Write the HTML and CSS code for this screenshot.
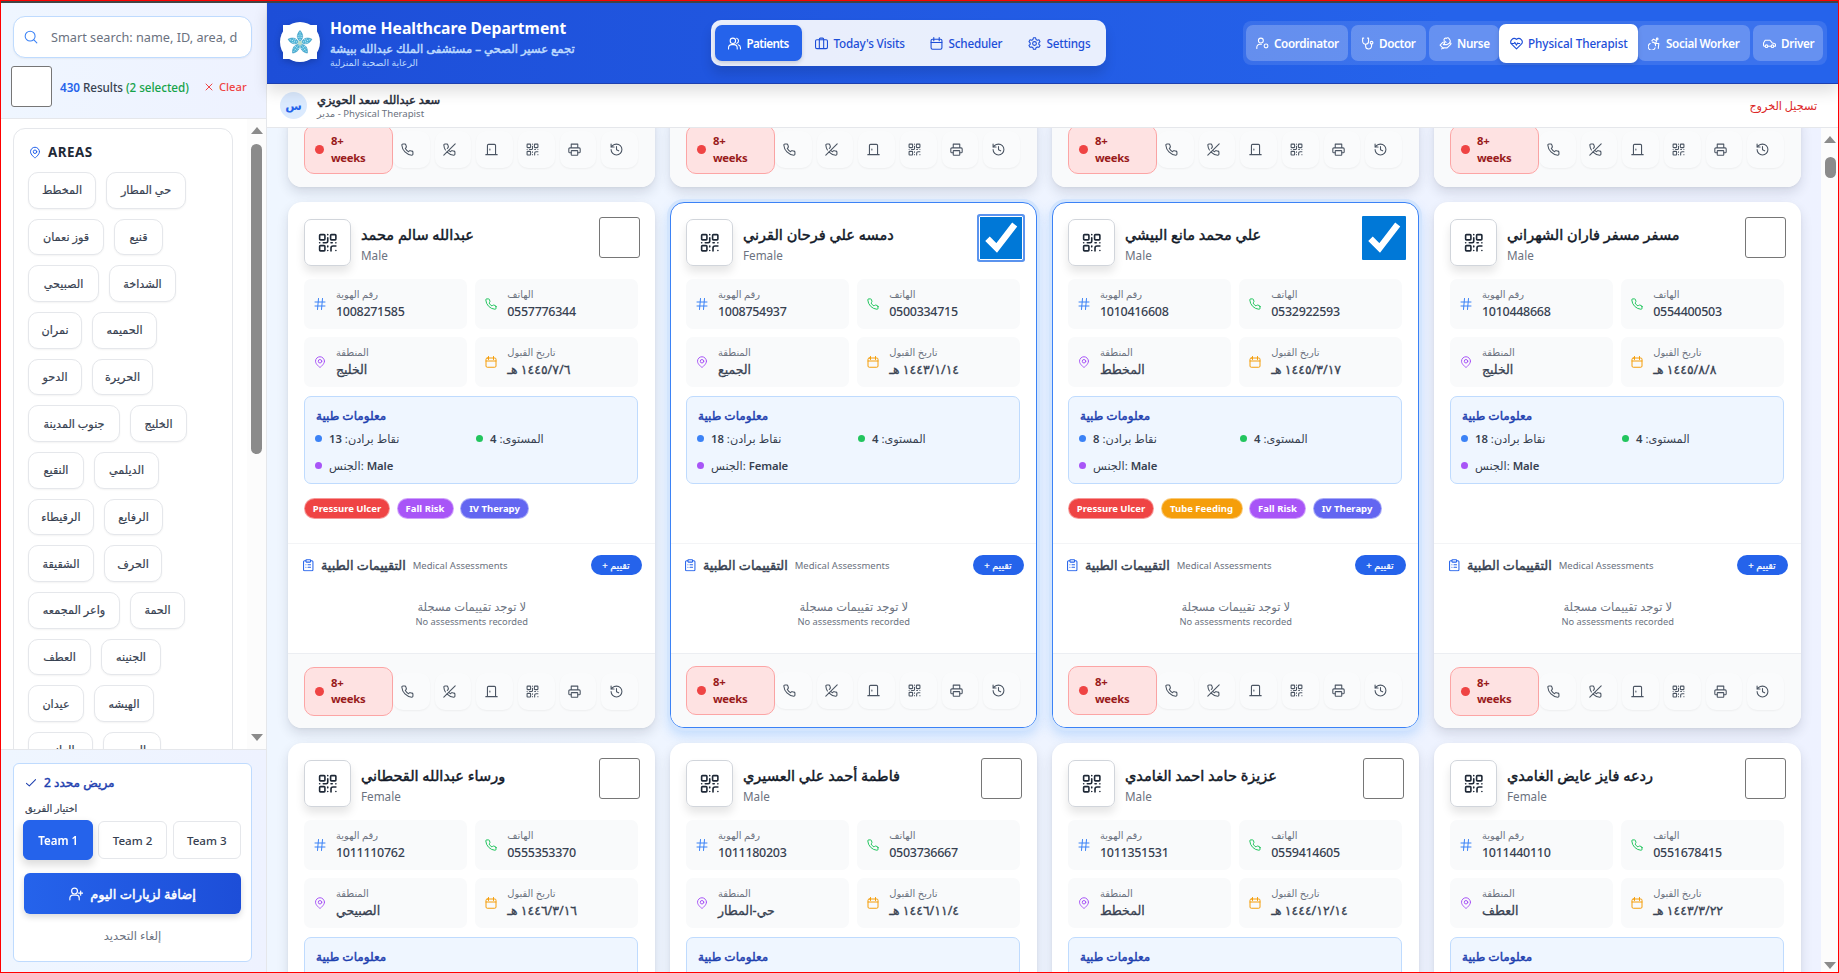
FILE: index.html
```html
<!DOCTYPE html>
<html lang="en">
<head>
<meta charset="utf-8">
<title>Home Healthcare Department</title>
<link rel="stylesheet" href="styles.css">
</head>
<body>
<svg class="sprite" aria-hidden="true">
  <symbol id="search" viewBox="0 0 24 24"><circle cx="10.5" cy="10.5" r="8.5"/><path d="m17 17 5 5"/></symbol>
  <symbol id="x" viewBox="0 0 24 24"><path d="M3 3l18 18M21 3 3 21"/></symbol>
  <symbol id="pin" viewBox="0 0 24 24"><path d="M21 10.500c0 6-9 12.500-9 12.500s-9-6.500-9-12.500a9 9 0 0 1 18 0z"/><circle cx="12" cy="10.500" r="3.500"/></symbol>
  <symbol id="check" viewBox="0 0 24 24"><path d="m1 13 7 6L23 4"/></symbol>
  <symbol id="tick" viewBox="0 0 44 44"><path d="M8.500 22.700 17.700 32 35.700 8.500"/></symbol>
  <symbol id="userplus" viewBox="0 0 24 24"><circle cx="9.500" cy="7" r="5"/><path d="M1.500 22v-3a5 5 0 0 1 5-5h6a5 5 0 0 1 5 5v3M20 7v7M16.500 10.500h7"/></symbol>
  <symbol id="users" viewBox="0 0 24 24"><circle cx="9" cy="7" r="5"/><path d="M1 22v-2a6 6 0 0 1 6-6h4a6 6 0 0 1 6 6v2M16 2.300a5 5 0 0 1 0 9.500M19 14.300a6 6 0 0 1 4 5.700v2"/></symbol>
  <symbol id="case" viewBox="0 0 24 24"><rect x="1" y="5" width="22" height="16.500" rx="2.500"/><path d="M8 21V4a2 2 0 0 1 2-2h4a2 2 0 0 1 2 2v17"/></symbol>
  <symbol id="calendar" viewBox="0 0 24 24"><rect x="2" y="4" width="20" height="18.500" rx="2.500"/><path d="M7 1v6M17 1v6M2 10h20"/></symbol>
  <symbol id="gear" viewBox="0 0 24 24"><path d="m10 1.500-.8 3-2.400 1.400-3-.8-2 3.500 2.200 2.200v2.600l-2.200 2.200 2 3.500 3-.8 2.400 1.400.8 3h4l.8-3 2.400-1.400 3 .8 2-3.500-2.200-2.200v-2.600l2.200-2.200-2-3.500-3 .8-2.400-1.400-.8-3z"/><circle cx="12" cy="12" r="3.500"/></symbol>
  <symbol id="usercog" viewBox="0 0 24 24"><circle cx="9" cy="6.500" r="4.500"/><path d="M1.500 21v-2a5.500 5.500 0 0 1 5.500-5.500h3"/><circle cx="18.500" cy="16.500" r="3.500"/></symbol>
  <symbol id="steth" viewBox="0 0 24 24"><path d="M5 2H3v6a5.500 5.500 0 0 0 11 0V2h-2M8.500 14v2.500a5.500 5.500 0 0 0 11 0V13"/><circle cx="19.500" cy="10.500" r="2.500"/></symbol>
  <symbol id="hand" viewBox="0 0 24 24"><path d="M2 15l5-5c2-1.500 4 0 3 2l-2 2h7l5-3c2-.5 3 1.500 1.500 2.500L15 20H7l-2 2M2 15l6 6"/><path d="M13 10 9.500 6.500a3 3 0 0 1 4-4 3 3 0 0 1 5 .5l2 3a3 3 0 0 1-1 4"/></symbol>
  <symbol id="heart" viewBox="0 0 24 24"><path d="M12 22 3.500 13.500a6 6 0 0 1 8.500-9 6 6 0 0 1 8.500 9z"/><path d="M2 12h5.500l1.500-2 3 5 2-4 1 1h3"/></symbol>
  <symbol id="wheel" viewBox="0 0 24 24"><circle cx="17" cy="3.500" r="1.500"/><path d="m19 21 1-9h-6l2-5-6-3-3 3M4 12a6.500 6.500 0 1 0 9 8M8 9.500a6.500 6.500 0 0 1 6 6.500"/></symbol>
  <symbol id="car" viewBox="0 0 24 24"><circle cx="6.500" cy="17" r="2.500"/><circle cx="17.500" cy="17" r="2.500"/><path d="M4 17H3a2 2 0 0 1-2-2v-4l3-5h9l4 5 4 1a2 2 0 0 1 2 2v3h-3M9 17h6"/></symbol>
  <symbol id="phone" viewBox="0 0 24 24"><path d="M22 17v3.500a2 2 0 0 1-2.200 2A20 20 0 0 1 1.600 4a2 2 0 0 1 2-2.200H7a2 2 0 0 1 2 1.700l.8 3a2 2 0 0 1-.5 2.100L8 10a16 16 0 0 0 6 6l1.400-1.300a2 2 0 0 1 2.100-.5l3 .8A2 2 0 0 1 22 17z"/></symbol>
  <symbol id="phoneoff" viewBox="0 0 24 24"><path d="M10.500 13.500A16 16 0 0 0 14 16l1.400-1.300a2 2 0 0 1 2.100-.5l3 .8A2 2 0 0 1 22 17v3.500a2 2 0 0 1-2.200 2A20 20 0 0 1 7 16.500M4.500 13A20 20 0 0 1 1.600 4a2 2 0 0 1 2-2.200H7a2 2 0 0 1 2 1.700l.8 3a2 2 0 0 1-.5 2.100L8 10M22.500 1.500l-21 21"/></symbol>
  <symbol id="door" viewBox="0 0 24 24"><path d="M1.500 21.500h21M4.500 21.500V4.500a2 2 0 0 1 2-2h11a2 2 0 0 1 2 2v17M9 11v2"/></symbol>
  <symbol id="qr" viewBox="0 0 24 24"><rect x="2" y="2" width="6.500" height="6.500" rx="1"/><rect x="15.500" y="2" width="6.500" height="6.500" rx="1"/><rect x="2" y="15.500" width="6.500" height="6.500" rx="1"/><path d="M12 2v.1M12 6v4a2 2 0 0 1-2 2H6.500M2 12h.1M16 12h1.500M22 12v.1M12 16v1M12 21.500v.1M22 16h-3.500a2.500 2.500 0 0 0-2.500 2.500V22M22 21.500v.1"/></symbol>
  <symbol id="print" viewBox="0 0 24 24"><path d="M6 9V2h12v7M6 18H3.500a2 2 0 0 1-2-2v-5a2 2 0 0 1 2-2h17a2 2 0 0 1 2 2v5a2 2 0 0 1-2 2H18"/><rect x="6" y="14" width="12" height="8.500" rx="1"/></symbol>
  <symbol id="history" viewBox="0 0 24 24"><path d="M2 12a10 10 0 1 0 10-10 11 11 0 0 0-7.500 3L2 7.500M2 2v5.500h5.500M12 6.500v6l4 2"/></symbol>
  <symbol id="hash" viewBox="0 0 24 24"><path d="M2 8h20M2 16h20M9 1 7 23M17 1l-2 22"/></symbol>
  <symbol id="clip" viewBox="0 0 24 24"><rect x="7.500" y="1.500" width="9" height="4.500" rx="1"/><path d="M16.500 3.500h2.500a2 2 0 0 1 2 2v15a2 2 0 0 1-2 2H5a2 2 0 0 1-2-2v-15a2 2 0 0 1 2-2h2.500M11.500 11h5M11.500 16h5M7.500 11h.1M7.500 16h.1"/></symbol>
</svg>

<div class="app">
  <aside class="sidebar">
    <div class="side-head">
      <div class="search"><svg class="icon"><use href="#search"/></svg><span>Smart search: name, ID, area, d</span></div>
      <div class="results">
        <span class="box"></span>
        <p class="count"><b>430</b> Results <i>(2 selected)</i></p>
        <a class="clear"><svg class="icon"><use href="#x"/></svg>Clear</a>
      </div>
    </div>
    <div class="side-scroll">
      <section class="areas">
        <h3><svg class="icon"><use href="#pin"/></svg>AREAS</h3>
        <div id="chips"></div>
      </section>
      <div class="bar side-bar"><i class="up"></i><i class="thumb"></i><i class="down"></i></div>
    </div>
    <div class="side-foot">
      <div class="assign">
        <h4><svg class="icon"><use href="#check"/></svg><span class="strong">2 مريض محدد</span></h4>
        <label>اختيار الفريق</label>
        <div class="teams"><span class="on">Team 1</span><span>Team 2</span><span>Team 3</span></div>
        <div class="add"><svg class="icon"><use href="#userplus"/></svg><span class="strong">إضافة لزيارات اليوم</span></div>
        <p class="cancel">إلغاء التحديد</p>
      </div>
    </div>
  </aside>

  <main class="main">
    <header class="top">
      <div class="brand">
        <div class="logo">
          <svg viewBox="-20 -20 40 40">
            <circle r="20" fill="#fff"/><rect x="-17" y="-17" width="34" height="34" fill="#fff"/>
            <g fill="#4db3d6" stroke="#2b8fbd" stroke-width=".5" transform="translate(0 1)">
              <path id="petal" d="M0-1.500C-4-5-3.200-9 0-12.500 3.200-9 4-5 0-1.500z"/>
              <use href="#petal" transform="rotate(72)"/><use href="#petal" transform="rotate(144)"/><use href="#petal" transform="rotate(216)"/><use href="#petal" transform="rotate(288)"/>
            </g>
            <g stroke="#c6ecf6" stroke-width=".9" stroke-dasharray="1.200 1" fill="none" transform="translate(0 1)">
              <path id="vein" d="M0-3V-11M-1.800-5V-8M1.800-5V-8"/>
              <use href="#vein" transform="rotate(72)"/><use href="#vein" transform="rotate(144)"/><use href="#vein" transform="rotate(216)"/><use href="#vein" transform="rotate(288)"/>
            </g>
            <circle cy="1" r="2.200" fill="#b9dcc8"/>
          </svg>
        </div>
        <div class="names">
          <h1>Home Healthcare Department</h1>
          <h2 class="strong">تجمع عسير الصحي – مستشفى الملك عبدالله ببيشة</h2>
          <p>الرعاية الصحية المنزلية</p>
        </div>
      </div>
      <nav class="tabs">
        <a class="on t1"><svg class="icon"><use href="#users"/></svg>Patients</a>
        <a class="t2"><svg class="icon"><use href="#case"/></svg>Today's Visits</a>
        <a class="t3"><svg class="icon"><use href="#calendar"/></svg>Scheduler</a>
        <a class="t4"><svg class="icon"><use href="#gear"/></svg>Settings</a>
      </nav>
      <nav class="roles">
        <a class="r1"><svg class="icon"><use href="#usercog"/></svg>Coordinator</a>
        <a class="r2"><svg class="icon"><use href="#steth"/></svg>Doctor</a>
        <a class="r3"><svg class="icon"><use href="#hand"/></svg>Nurse</a>
        <a class="r4 on"><svg class="icon"><use href="#heart"/></svg>Physical Therapist</a>
        <a class="r5"><svg class="icon"><use href="#wheel"/></svg>Social Worker</a>
        <a class="r6"><svg class="icon"><use href="#car"/></svg>Driver</a>
      </nav>
    </header>
    <div class="userbar">
      <span class="avatar">س</span>
      <div class="who"><b class="strong">سعد عبدالله سعد الحويزي</b><span>مدير - Physical Therapist</span></div>
      <a class="logout">تسجيل الخروج</a>
    </div>
    <div class="content">
      <div class="grid" id="grid"></div>
      <div class="bar main-bar"><i class="up"></i><i class="thumb"></i><i class="down"></i></div>
    </div>
  </main>
</div>
<script src="app.js"></script>
</body>
</html>
```
FILE: styles.css
```css
* { box-sizing: border-box; margin: 0; padding: 0; }
body { font-family: "Noto Sans", "Open Sans", "DejaVu Sans", sans-serif; color: #374151; overflow: hidden; }
i { font-style: normal; }
.sprite { display: none; }
.icon { width: 12px; height: 12px; flex: none; fill: none; stroke: currentColor; stroke-width: 2; stroke-linecap: round; stroke-linejoin: round; overflow: visible; }
/* Arabic emphasis: regular face thickened, keeps the narrow widths */
.strong { font-weight: 400 !important; -webkit-text-stroke: .45px currentColor; }

.app { display: flex; width: 1839px; height: 973px; border: 1px solid #f00; background: #fff; position: relative; box-shadow: inset 0 2px #444; padding-top: 2px; }

/* sidebar */
.sidebar { width: 266px; flex: none; display: flex; flex-direction: column; border-right: 1px solid #e5e7eb; background: #fff; }
.side-head { height: 116px; flex: none; padding: 13px 14px 0 12px; background: linear-gradient(90deg, #eff6ff, #eef2ff); border-bottom: 1px solid #e5e7eb; }
.search { height: 42px; display: flex; align-items: center; gap: 13px; padding-left: 10px; background: #fff; border: 1px solid #bfdbfe; border-radius: 12px; font-size: 12.7px; color: #6b7280; box-shadow: 0 1px 2px rgba(0,0,0,.05); white-space: nowrap; }
.search .icon { width: 14px; height: 14px; color: #3b82f6; stroke-width: 1.8; }
.results { display: flex; align-items: center; margin: 8px 0 0 -2px; }
.box { width: 41px; height: 41px; flex: none; background: #fff; border: 1px solid #767676; border-radius: 3px; }
.count { margin-left: 8px; font-size: 11.7px; font-weight: 500; white-space: nowrap; width: 146px; letter-spacing: -.05px; }
.count b { color: #2563eb; font-weight: 600; }
.count i { color: #16a34a; }
.clear { display: flex; align-items: center; gap: 6px; font-size: 11.2px; font-weight: 500; color: #ef4444; margin-left: -1px; }
.clear .icon { width: 8px; height: 8px; stroke-width: 3; }
.side-scroll { flex: 1; min-height: 0; overflow: hidden; display: flex; justify-content: space-between; padding-left: 12px; }
.areas { width: 220px; margin-top: 9px; height: 800px; border: 1px solid #e5e7eb; border-radius: 12px; padding: 13px 14px; background: #fff; }
.areas h3 { display: flex; align-items: center; gap: 7px; height: 20px; font-size: 13.4px; letter-spacing: .5px; color: #1f2937; padding-left: 1px; }
.areas h3 .icon { color: #2563eb; height: 13px; }
#chips { padding-top: 10px; display: grid; row-gap: 10px; }
.row { display: flex; gap: 10px; }
.chip { height: 36.67px; display: flex; align-items: center; justify-content: center; border: 1px solid #e5e7eb; border-radius: 10px; background: #fff; font-size: 11.2px; font-weight: 400; -webkit-text-stroke: .2px currentColor; box-shadow: 0 1px 2px rgba(0,0,0,.05); white-space: nowrap; padding-bottom: 1px; }

.bar { display: flex; flex-direction: column; align-items: center; background: #fcfcfc; }
.side-bar { width: 19px; padding-top: 8px; }
.up, .down { width: 0; height: 0; border: 6.5px solid transparent; border-top: 0; border-bottom: 7px solid #8b8b8b; }
.down { border-bottom: 0; border-top: 7px solid #8b8b8b; }
.thumb { width: 11px; border-radius: 6px; background: #8b8b8b; }
.side-bar .thumb { height: 310px; margin-top: 10px; }
.side-bar .down { margin-top: 280px; }

.side-foot { height: 223px; flex: none; border-top: 1px solid #e5e7eb; padding: 13px 14px 0 12px; background: linear-gradient(90deg, #eff6ff, #eef2ff); }
.assign { height: 199px; border: 1px solid #bfdbfe; border-radius: 6px; background: #fff; padding: 9px 10px 0; }
.assign h4 { display: flex; align-items: center; gap: 8px; height: 19px; padding-left: 2px; font-size: 12.1px; color: #1e40af; }
.assign h4 .icon { width: 10px; height: 10px; stroke-width: 2.6; }
.assign label { display: block; height: 14px; line-height: 14px; margin: 9px 0 6px 1px; font-size: 9.9px; -webkit-text-stroke: .2px currentColor; }
.teams { display: flex; gap: 6px; }
.teams span { flex: 1; height: 38px; display: grid; place-items: center; border: 1px solid #e5e7eb; border-radius: 6px; font-size: 11.6px; font-weight: 500; }
.teams .on { background: #2563eb; border-color: #2563eb; color: #fff; font-weight: 600; transform: scale(1.03, 1.05); box-shadow: 0 4px 8px rgba(0,0,0,.14); font-size: 11.2px; }
.add { margin-top: 14px; height: 41px; border-radius: 6px; display: flex; align-items: center; justify-content: center; gap: 7px; color: #fff; font-size: 13px; background: linear-gradient(90deg, #2563eb, #1d4ed8); box-shadow: 0 3px 6px rgba(0,0,0,.15); }
.add .icon { width: 14px; height: 14px; }
.cancel { text-align: center; margin-top: 13px; font-size: 11.6px; line-height: 18px; color: #6b7280; }

/* header */
.main { flex: 1; min-width: 0; display: flex; flex-direction: column; }
.top { height: 81px; flex: none; position: relative; z-index: 2; display: flex; justify-content: space-between; align-items: center; padding: 0 11px 0 13px; background: linear-gradient(90deg, #1d4ed8, #2563eb 75%); border-bottom: 1px solid #1e40af; box-shadow: 0 8px 14px rgba(0,0,0,.12); }
.brand { display: flex; gap: 10px; width: 431px; }
.logo { width: 40px; height: 40px; margin-top: 4px; }
.logo svg { display: block; width: 40px; height: 40px; filter: drop-shadow(0 2px 3px rgba(0,0,0,.2)); }
.names { white-space: nowrap; color: #fff; margin-top: -1px; }
.names h1 { font-size: 15.7px; line-height: 22px; }
.names h2 { font-size: 11.6px; line-height: 19px; color: #bfdbfe; }
.names p { font-size: 9.3px; line-height: 10px; color: #bfdbfe; }
.tabs { width: 395px; height: 46px; display: flex; align-items: center; padding: 0 4px; border-radius: 10px; background: rgba(255,255,255,.9); box-shadow: 0 8px 12px rgba(0,0,0,.12); margin-right: 137px; }
.tabs a, .roles a { display: flex; align-items: center; height: 36px; border-radius: 7px; font-size: 11.7px; font-weight: 500; white-space: nowrap; letter-spacing: -.2px; }
.tabs a { color: #1d4ed8; gap: 5.5px; padding-left: 13px; }
.tabs .icon { width: 13px; height: 13px; }
.tabs .on { background: #2563eb; color: #fff; font-weight: 600; box-shadow: 0 2px 4px rgba(0,0,0,.15); letter-spacing: -.6px; }
.t1 { width: 87px; } .t2 { width: 115px; } .t3 { width: 98px; } .t4 { width: 84px; }
.roles { width: 584px; height: 44px; display: flex; align-items: center; padding: 0 3px; gap: 3px; border-radius: 8px; background: rgba(255,255,255,.1); flex: none; }
.roles a { background: rgba(255,255,255,.22); color: #fff; font-weight: 600; font-size: 11.7px; gap: 5px; padding-left: 10px; flex: none; letter-spacing: -.35px; }
.roles .icon { width: 13px; height: 13px; }
.roles .on { background: #fff; color: #1d4ed8; height: 39px; margin: 0 -3px; z-index: 1; font-weight: 500; box-shadow: 0 2px 5px rgba(0,0,0,.12); padding-left: 11px; letter-spacing: -.05px; }
.r1 { width: 102px; } .r2 { width: 75px; } .r3 { width: 70px; } .r4 { width: 139px; } .r5 { width: 112px; } .r6 { width: 70px; }

.userbar { height: 44px; flex: none; display: flex; align-items: center; padding: 0 21px 0 13px; background: #fff; border-bottom: 1px solid #e5e7eb; }
.avatar { width: 27px; height: 27px; border-radius: 50%; background: #dbeafe; color: #2563eb; font-size: 12px; font-weight: 700; display: grid; place-items: center; }
.who { margin-left: 10px; white-space: nowrap; display: grid; }
.who b { font-size: 11.5px; line-height: 16px; color: #1f2937; }
.who span { font-size: 9.6px; line-height: 12px; color: #6b7280; }
.logout { margin-left: auto; color: #dc2626; font-size: 11.2px; }

/* patient grid */
.content { flex: 1; min-height: 0; overflow: hidden; display: flex; justify-content: space-between; padding-left: 20.5px; background: linear-gradient(90deg, #eff6ff, #eef2ff); }
.grid { width: 1513px; flex: none; align-self: flex-start; margin-top: -17px; display: grid; grid-template-columns: repeat(4, 367px); grid-template-rows: 76px; grid-auto-rows: 526.3px; gap: 15px; }
.main-bar { width: 17px; padding: 8px 0 3px 1px; }
.main-bar .thumb { margin-top: 14px; height: 21px; }
.main-bar .down { margin-top: auto; }
.card { background: #fff; border-radius: 14px; box-shadow: 0 6px 12px rgba(30,41,59,.13), 0 1px 3px rgba(0,0,0,.05); overflow: hidden; }
.card.sel { border: 1px solid #3b82f6; box-shadow: 0 0 0 3px #d3e5fd, 0 6px 12px 2px rgba(96,165,250,.3); }
.body { height: 341px; padding: 15px 16.5px 0; }
.card.sel .body { height: 340px; padding: 14px 15.5px 0; }
.card.sel .assess { padding: 10.5px 12px 0 13.5px; }
.card.sel .actions { height: 75px; padding-left: 15.5px; padding-right: 15.5px; }
.head { display: flex; height: 62px; }
.qrbtn { width: 47px; height: 47px; margin-top: 2px; border: 1px solid #d1d5db; border-radius: 7px; display: grid; place-items: center; color: #1f2937; box-shadow: 0 6px 10px rgba(0,0,0,.1); }
.qrbtn .icon { width: 19.5px; height: 19.5px; stroke-width: 2; }
.person { margin-left: 10px; padding-top: 4.5px; white-space: nowrap; }
.person h3 { font-size: 14.5px; line-height: 24px; color: #111827; }
.person p { font-size: 11.7px; line-height: 18.5px; color: #6b7280; }
.head .box { margin-left: auto; margin-right: -2px; }
.head .box.on { width: 44px; height: 44px; margin: -1.500px -3.500px 0 auto; border: 0; border-radius: 1px; background: #0078d7; color: #fff; }
.head .box.on .icon { display: block; width: 44px; height: 44px; stroke-width: 6.4; stroke-linecap: butt; stroke-linejoin: miter; }
.head .box.focus { outline: 1px solid #fff; outline-offset: -1px; box-shadow: 0 0 0 2px #5b93ee; margin-right: -3px; }
.tiles { display: grid; grid-template-columns: 1fr 1fr; gap: 8.5px; }
.tile { height: 49.7px; border-radius: 7px; background: #f9fafb; display: flex; align-items: center; gap: 10.5px; padding-left: 9.5px; white-space: nowrap; }
.tile .icon { width: 12px; height: 12px; }
.tile div { display: grid; }
.tile small { font-size: 9.9px; line-height: 15px; color: #6b7280; }
.tile b { font-size: 12.5px; line-height: 19px; font-weight: 400; -webkit-text-stroke: .3px currentColor; }
.tile .num { font-weight: 500; -webkit-text-stroke: 0; letter-spacing: -.3px; }
.c1 { color: #3b82f6; } .c2 { color: #22c55e; } .c3 { color: #a855f7; } .c4 { color: #f59e0b; }
.med { margin-top: 9px; height: 88px; border: 1px solid #bfdbfe; border-radius: 7px; background: #eff6ff; padding: 9px 10px; }
.med h4 { font-size: 12px; line-height: 20px; color: #1e40af; padding-left: 1px; }
.facts { display: grid; grid-template-columns: 161px 1fr; grid-auto-rows: 27px; margin-top: -1px; }
.facts p { display: flex; align-items: center; font-size: 11.3px; white-space: nowrap; }
.facts p::before { content: ""; width: 7px; height: 7px; border-radius: 50%; background: currentColor; margin-right: 7px; }
.facts span { color: #374151; } .facts b { font-weight: 600; letter-spacing: -.1px; }
.facts .k1 { color: #3b82f6; } .facts .k2 { color: #22c55e; } .facts .k3 { color: #a855f7; }
.tags { display: flex; gap: 6.5px; margin-top: 14px; }
.tag { height: 21.5px; border-radius: 11px; border: 1px solid rgba(255,255,255,.45); color: #fff; font-size: 9.5px; font-weight: 700; display: grid; place-items: center; white-space: nowrap; }
.tag-p { width: 86px; background: #ef4444; } .tag-t { width: 82px; background: #f59e0b; } .tag-f { width: 57px; background: #a855f7; } .tag-i { width: 69px; background: #6366f1; }
.assess { height: 109.500px; border-top: 1px solid #f3f4f6; padding: 10.500px 13px 0 14.500px; }
.ahead { display: flex; align-items: center; height: 21px; white-space: nowrap; }
.ahead .icon { width: 12.500px; height: 12.500px; color: #2563eb; }
.ahead h4 { margin-left: 6.500px; font-size: 12.800px; }
.ahead small { margin-left: 7px; font-size: 9.500px; color: #6b7280; }
.ahead span { margin-left: auto; width: 51px; height: 20px; border-radius: 10px; background: #2563eb; color: #fff; font-size: 9.500px; -webkit-text-stroke: .2px currentColor; display: grid; place-items: center; }
.none { text-align: center; padding-top: 22.500px; color: #6b7280; }
.none p { font-size: 11.500px; line-height: 18px; }
.none small { display: block; font-size: 9.300px; line-height: 11px; }
.actions { height: 76px; display: flex; align-items: center; border-top: 1px solid #eceef2; background: #f9fafb; padding: 0 16.500px; }
.weeks { width: 89px; height: 49px; display: flex; align-items: center; gap: 7px; padding-left: 10px; border: 1px solid #fca5a5; border-radius: 10px; background: #fee2e2; color: #991b1b; font-size: 11.300px; line-height: 16.500px; font-weight: 700; letter-spacing: -.3px; }
.weeks::before { content: ""; width: 9px; height: 9px; border-radius: 50%; background: #ef4444; }
.acts { flex: 1; display: flex; justify-content: space-between; }
.acts span { width: 36.500px; height: 37px; display: grid; place-items: center; padding-right: 7px; border-radius: 10px; background: #fafbfc; box-shadow: 0 1px 2px rgba(0,0,0,.05); color: #4b5563; }
.acts .icon { width: 13px; height: 13px; }
```
FILE: app.js
```js
const icon = (name, cls = "") => `<svg class="icon ${cls}"><use href="#${name}"/></svg>`;

const chips = [
  [["المخطط", 68], ["حي المطار", 80]],
  [["قوز نعمان", 76], ["قنيع", 49]],
  [["الصبيحي", 71], ["الشداخة", 67]],
  [["نمران", 54], ["الحميمه", 65]],
  [["الدحو", 54], ["الحريرة", 61]],
  [["جنوب المدينة", 92], ["الخليج", 57]],
  [["النقيع", 56], ["الديلمي", 65]],
  [["الرقيطاء", 66], ["الرفايع", 59]],
  [["الشقيقة", 66], ["الحرف", 58]],
  [["واعر المجمعه", 92], ["الحمة", 55]],
  [["العطف", 63], ["الجنينه", 60]],
  [["عيدان", 56], ["الهيشه", 60]],
  [["الدانيه", 65], ["السرو", 58]]
];

document.getElementById("chips").innerHTML = chips.map(row =>
  `<div class="row">${row.map(([name, w]) => `<span class="chip" style="width:${w}px">${name}</span>`).join("")}</div>`
).join("");

const tagNames = { p: "Pressure Ulcer", t: "Tube Feeding", f: "Fall Risk", i: "IV Therapy" };

const patients = [
  { name: "عبدالله سالم محمد", sex: "Male", id: "1008271585", phone: "0557776344", area: "الخليج", date: "١٤٤٥/٧/٦ هـ", score: 13, tags: "pfi" },
  { name: "دمسه علي فرحان القرني", sex: "Female", id: "1008754937", phone: "0500334715", area: "الجميع", date: "١٤٤٣/١/١٤ هـ", score: 18, tags: "", sel: "focus" },
  { name: "علي محمد مانع البيشي", sex: "Male", id: "1010416608", phone: "0532922593", area: "المخطط", date: "١٤٤٥/٣/١٧ هـ", score: 8, tags: "ptfi", sel: "on" },
  { name: "مسفر مسفر فاران الشهراني", sex: "Male", id: "1010448668", phone: "0554400503", area: "الخليج", date: "١٤٤٥/٨/٨ هـ", score: 18, tags: "" },
  { name: "ورساء عبدالله القحطاني", sex: "Female", id: "1011110762", phone: "0555353370", area: "الصبيحي", date: "١٤٤٦/٣/١٦ هـ", score: 18, tags: "" },
  { name: "فاطمة أحمد علي العسيري", sex: "Male", id: "1011180203", phone: "0503736667", area: "حي-المطار", date: "١٤٤٦/١١/٤ هـ", score: 18, tags: "" },
  { name: "عزيزة حامد احمد الغامدي", sex: "Male", id: "1011351531", phone: "0559414605", area: "المخطط", date: "١٤٤٤/١٢/١٤ هـ", score: 18, tags: "" },
  { name: "ردعه فايز عايض الغامدي", sex: "Female", id: "1011440110", phone: "0551678415", area: "العطف", date: "١٤٤٣/٣/٢٢ هـ", score: 18, tags: "" }
];

const actions = `<div class="actions"><div class="weeks"><span>8+<br>weeks</span></div><div class="acts">${
  ["phone", "phoneoff", "door", "qr", "print", "history"].map(n => `<span>${icon(n)}</span>`).join("")
}</div></div>`;

const tile = (name, cls, label, value, kind = "") =>
  `<div class="tile">${icon(name, cls)}<div><small>${label}</small><b class="${kind}">${value}</b></div></div>`;

const card = p => `<article class="card ${p.sel ? "sel" : ""}">
  <div class="body">
    <div class="head">
      <span class="qrbtn">${icon("qr")}</span>
      <div class="person"><h3 class="strong">${p.name}</h3><p>${p.sex}</p></div>
      <span class="box ${p.sel ? "on " + p.sel : ""}">${p.sel ? icon("tick") : ""}</span>
    </div>
    <div class="tiles">
      ${tile("hash", "c1", "رقم الهوية", p.id, "num")}
      ${tile("phone", "c2", "الهاتف", p.phone, "num")}
      ${tile("pin", "c3", "المنطقة", p.area)}
      ${tile("calendar", "c4", "تاريخ القبول", p.date)}
    </div>
    <div class="med">
      <h4 class="strong">معلومات طبية</h4>
      <div class="facts">
        <p class="k1"><span>نقاط برادن: <b>${p.score}</b></span></p>
        <p class="k2"><span>المستوى: <b>4</b></span></p>
        <p class="k3"><span>الجنس: <b>${p.sex}</b></span></p>
      </div>
    </div>
    <div class="tags">${[...p.tags].map(t => `<span class="tag tag-${t}">${tagNames[t]}</span>`).join("")}</div>
  </div>
  <div class="assess">
    <div class="ahead">${icon("clip")}<h4 class="strong">التقييمات الطبية</h4><small>Medical Assessments</small><span>+ تقييم</span></div>
    <div class="none"><p>لا توجد تقييمات مسجلة</p><small>No assessments recorded</small></div>
  </div>
  ${actions}
</article>`;

document.getElementById("grid").innerHTML =
  `<article class="card">${actions}</article>`.repeat(4) + patients.map(card).join("");
```
